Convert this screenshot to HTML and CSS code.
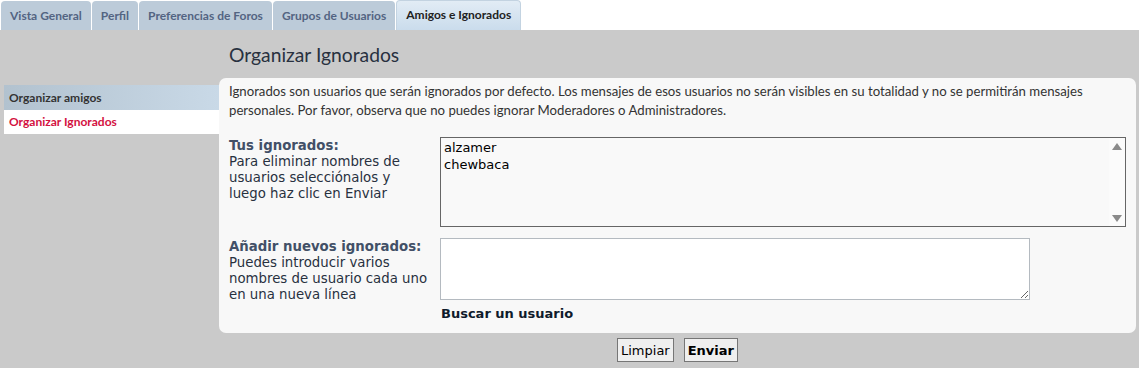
FILE: index.html
```html
<!DOCTYPE html>
<html lang="es">
<head>
<meta charset="utf-8">
<title>Amigos e Ignorados</title>
<link rel="stylesheet" href="styles.css">
</head>
<body>
<ul class="tabs">
  <li class="tab">Vista General</li>
  <li class="tab">Perfil</li>
  <li class="tab">Preferencias de Foros</li>
  <li class="tab">Grupos de Usuarios</li>
  <li class="tab active">Amigos e Ignorados</li>
</ul>
<div class="main">
  <ul class="sidenav">
    <li class="nav-item nav-head">Organizar amigos</li>
    <li class="nav-item nav-current">Organizar Ignorados</li>
  </ul>
  <div class="content">
    <h2 class="title">Organizar Ignorados</h2>
    <div class="panel">
      <p class="intro">Ignorados son usuarios que serán ignorados por defecto. Los mensajes de esos usuarios no serán visibles en su totalidad y no se permitirán mensajes personales. Por favor, observa que no puedes ignorar Moderadores o Administradores.</p>
      <div class="row row-first">
        <div class="label">
          <strong>Tus ignorados:</strong>
          <span class="desc">Para eliminar nombres de usuarios selecciónalos y luego haz clic en Enviar</span>
        </div>
        <div class="field">
          <div class="listbox">
            <ul class="options">
              <li>alzamer</li>
              <li>chewbaca</li>
            </ul>
            <div class="scroll">
              <span class="arrow up"></span>
              <span class="arrow down"></span>
            </div>
          </div>
        </div>
      </div>
      <div class="row">
        <div class="label">
          <strong>Añadir nuevos ignorados:</strong>
          <span class="desc">Puedes introducir varios nombres de usuario cada uno en una nueva línea</span>
        </div>
        <div class="field">
          <textarea class="newnames"></textarea>
          <a class="search" href="#">Buscar un usuario</a>
        </div>
      </div>
    </div>
    <div class="buttons">
      <button class="btn" type="button">Limpiar</button>
      <button class="btn btn-primary" type="button">Enviar</button>
    </div>
  </div>
</div>
</body>
</html>
```
FILE: styles.css
```css
html, body {
  margin: 0;
  padding: 0;
  background: #ffffff;
}
body {
  font-family: "Lato", "Liberation Sans", sans-serif;
  font-size: 13px;
  color: #333333;
  height: 368px;
  display: flex;
  flex-direction: column;
}
ul {
  list-style: none;
  margin: 0;
  padding: 0;
}

/* tabs */
.tabs {
  display: flex;
  gap: 1px;
  padding: 1px 0 0 1px;
  height: 29px;
}
.tab {
  background: #bccbd9;
  color: #536482;
  font-weight: 700;
  font-size: 12px;
  padding: 0 9px;
  line-height: 29px;
  border-radius: 4px 4px 0 0;
}
.tab.active {
  background: linear-gradient(to bottom, #e2ecf5 0%, #cadcec 100%);
  color: #222222;
  border: 1px solid #c3d3e1;
  border-bottom: none;
  line-height: 28px;
  margin-top: -1px;
  padding: 0 9px;
}

/* main area */
.main {
  flex: 1;
  background: #cacaca;
  display: flex;
  padding: 0 4px;
}
.sidenav {
  width: 215px;
  margin-top: 55px;
  flex-shrink: 0;
}
.nav-item {
  font-weight: 700;
  font-size: 12px;
  padding: 0 5px;
  line-height: 24px;
}
.nav-head {
  background: linear-gradient(to right, #b2c2cf 0%, #c9d9e7 100%);
  color: #333333;
  height: 25px;
  line-height: 25px;
}
.nav-current {
  background: #ffffff;
  color: #d31141;
}

.content {
  flex: 1;
  display: flex;
  flex-direction: column;
}
.title {
  margin: 0;
  padding: 13px 0 0 10px;
  height: 35px;
  font-weight: 400;
  font-size: 19.3px;
  line-height: 24px;
  color: #28313f;
}
.panel {
  background: #f8f8f8;
  border-radius: 7px;
  padding: 4px 10px 11px 10px;
}
.intro {
  margin: 0;
  font-size: 13.2px;
  line-height: 19px;
  color: #333333;
}

.row {
  display: flex;
  margin-top: 11px;
}
.row-first {
  margin-top: 17px;
}
.label {
  width: 211px;
  flex-shrink: 0;
  padding-right: 12px;
  box-sizing: border-box;
  font-family: "DejaVu Sans", Verdana, sans-serif;
  font-size: 13.3px;
  line-height: 16px;
  padding-top: 1px;
}
.label strong {
  display: block;
  color: #425067;
  font-weight: 700;
}
.desc {
  display: block;
  color: #28313f;
}
.field {
  flex: 1;
  display: flex;
  flex-direction: column;
  align-items: flex-start;
}

.listbox {
  width: 686px;
  height: 90px;
  box-sizing: border-box;
  border: 1px solid #666666;
  background: #f9f9f9;
  display: flex;
}
.options {
  flex: 1;
  padding: 1px 3px;
  font-family: "DejaVu Sans", Verdana, sans-serif;
  font-size: 13px;
  line-height: 17px;
  color: #000000;
}
.scroll {
  width: 16px;
  background: #fbfbfb;
  display: flex;
  flex-direction: column;
  justify-content: space-between;
  align-items: center;
  padding: 5px 0 4px;
}
.arrow {
  width: 0;
  height: 0;
  border-left: 5px solid transparent;
  border-right: 5px solid transparent;
}
.arrow.up {
  border-bottom: 7px solid #8a8a8a;
}
.arrow.down {
  border-top: 7px solid #8a8a8a;
}

.newnames {
  width: 590px;
  height: 62px;
  box-sizing: border-box;
  border: 1px solid #b4bac0;
  background: #ffffff;
  margin: 0;
  font-family: "DejaVu Sans", Verdana, sans-serif;
  font-size: 12px;
}
.search {
  margin-top: 6px;
  margin-left: 1px;
  font-family: "DejaVu Sans", Verdana, sans-serif;
  font-size: 13px;
  font-weight: 700;
  color: #0f1b2b;
  text-decoration: none;
  line-height: 16px;
}

.buttons {
  display: flex;
  justify-content: center;
  gap: 10px;
  padding-top: 5px;
}
.btn {
  font-family: "DejaVu Sans", Verdana, sans-serif;
  font-size: 13px;
  color: #000000;
  background: #efefef;
  border: 1px solid #767676;
  border-radius: 0;
  height: 24px;
  padding: 0 3px;
}
.btn-primary {
  font-weight: 700;
}
```
